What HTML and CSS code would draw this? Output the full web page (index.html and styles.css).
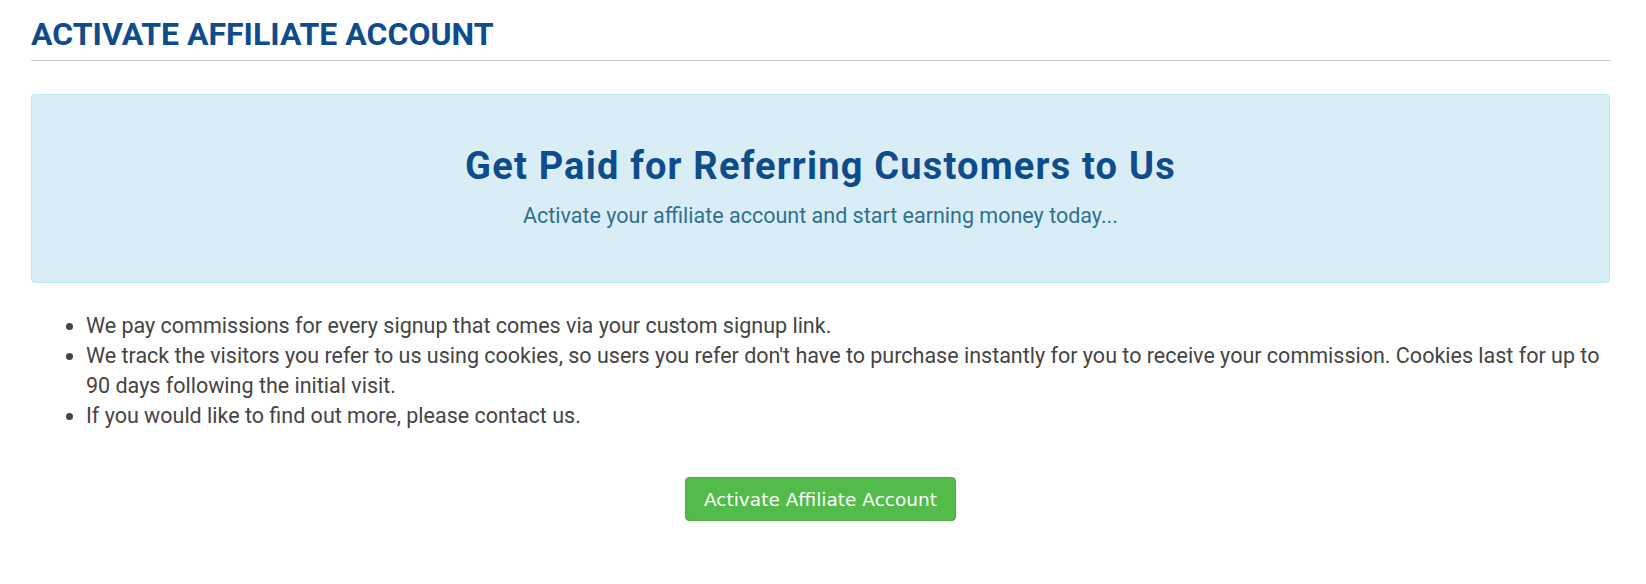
FILE: index.html
```html
<!DOCTYPE html>
<html lang="en">
<head>
    <meta charset="UTF-8">
    <title>Activate Affiliate Account</title>
    <link rel="stylesheet" href="styles.css">
</head>
<body>
    <div class="page">
        <div class="page-header">
            <h1>ACTIVATE AFFILIATE ACCOUNT</h1>
        </div>

        <div class="alert-info">
            <h2>Get Paid for Referring Customers to Us</h2>
            <p>Activate your affiliate account and start earning money today...</p>
        </div>

        <ul class="points">
            <li>We pay commissions for every signup that comes via your custom signup link.</li>
            <li>We track the visitors you refer to us using cookies, so users you refer don't have to purchase instantly for you to receive your commission. Cookies last for up to 90 days following the initial visit.</li>
            <li>If you would like to find out more, please contact us.</li>
        </ul>

        <div class="actions">
            <button class="btn-success">Activate Affiliate Account</button>
        </div>
    </div>
</body>
</html>
```

FILE: styles.css
```css
body {
    margin: 0;
    background: #fff;
    font-family: Roboto, "Liberation Sans", sans-serif;
    color: #444;
}
.page {
    padding: 0 36px 0 31px;
}
.page-header {
    padding: 14px 0 6px;
    border-bottom: 1px solid #cccccc;
}
.page-header h1 {
    margin: 0;
    font-size: 32px;
    line-height: 40px;
    font-weight: 700;
    color: #0e4c8b;
}
.alert-info {
    margin-top: 33px;
    padding: 51px 20px 51px;
    background-color: #d9edf7;
    border: 1px solid #bce8f1;
    border-radius: 4px;
    text-align: center;
}
.alert-info h2 {
    margin: 0;
    font-size: 38px;
    line-height: 40px;
    letter-spacing: 1.2px;
    font-weight: 700;
    color: #0e4c8b;
}
.alert-info p {
    margin: 15px 0 0;
    font-size: 21.5px;
    line-height: 30px;
    color: #31708f;
}
.points {
    margin: 28px 0 0;
    padding-left: 55px;
    font-size: 21.5px;
    line-height: 30px;
}
.actions {
    margin-top: 46px;
    text-align: center;
}
.btn-success {
    width: 271px;
    height: 44px;
    background: #52bb4a;
    color: #fff;
    border: 1px solid #4cae44;
    border-radius: 4px;
    font-family: "DejaVu Sans", Verdana, sans-serif;
    font-size: 18.5px;
    cursor: pointer;
}
```
